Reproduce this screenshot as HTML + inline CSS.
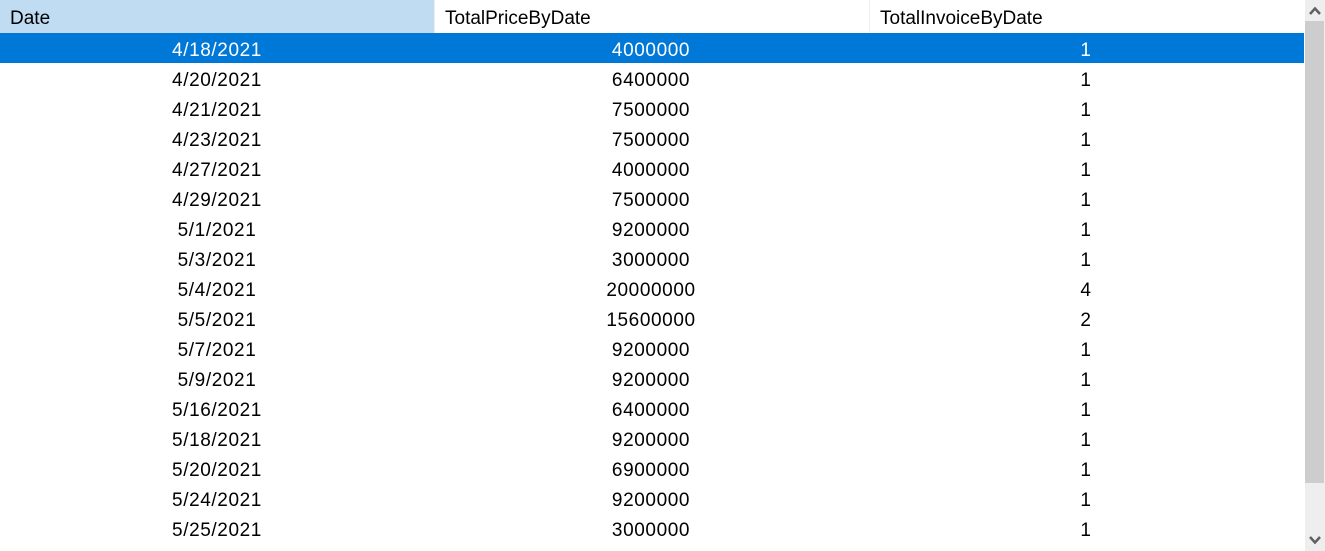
<!DOCTYPE html>
<html><head><style>
body{margin:0;width:1325px;height:551px;overflow:hidden;background:#fff;font-family:"Liberation Sans",sans-serif;font-size:19px;color:#000;position:relative}
.h{position:absolute;top:0;height:33px;line-height:38px;padding-left:10px;box-sizing:border-box}
.r{position:absolute;left:0;width:1304px;height:30px;line-height:35px;letter-spacing:0.6px}
.r span{position:absolute;width:434px;text-align:center}
.sel{background:#0078d7;color:#fff}
</style></head><body>
<div class="h" style="left:0;width:434px;background:#bfdcf3">Date</div>
<div class="h" style="left:434px;width:435px;border-left:1px solid #eee">TotalPriceByDate</div>
<div class="h" style="left:869px;width:435px;border-left:1px solid #eee">TotalInvoiceByDate</div>
<div id="rows"></div>
<div style="position:absolute;left:1305px;top:0;width:20px;height:551px;background:#eeeeee"></div>
<div style="position:absolute;left:1305px;top:21px;width:19px;height:462px;background:#cdcdcd"></div>
<svg style="position:absolute;left:1305px;top:0" width="20" height="551">
<path d="M5 14 L10 8.5 L15 14" stroke="#606060" stroke-width="2.5" fill="none"/>
<path d="M5 537 L10 542.5 L15 537" stroke="#606060" stroke-width="2.5" fill="none"/>
</svg>
<script>
var d=[["4/18/2021","4000000","1"],["4/20/2021","6400000","1"],["4/21/2021","7500000","1"],["4/23/2021","7500000","1"],["4/27/2021","4000000","1"],["4/29/2021","7500000","1"],["5/1/2021","9200000","1"],["5/3/2021","3000000","1"],["5/4/2021","20000000","4"],["5/5/2021","15600000","2"],["5/7/2021","9200000","1"],["5/9/2021","9200000","1"],["5/16/2021","6400000","1"],["5/18/2021","9200000","1"],["5/20/2021","6900000","1"],["5/24/2021","9200000","1"],["5/25/2021","3000000","1"]];
var h="";d.forEach(function(r,i){h+='<div class="r'+(i==0?' sel':'')+'" style="top:'+(33+30*i)+'px"><span style="left:0">'+r[0]+'</span><span style="left:434px">'+r[1]+'</span><span style="left:869px">'+r[2]+'</span></div>';});
document.getElementById("rows").innerHTML=h;
</script>
</body></html>
